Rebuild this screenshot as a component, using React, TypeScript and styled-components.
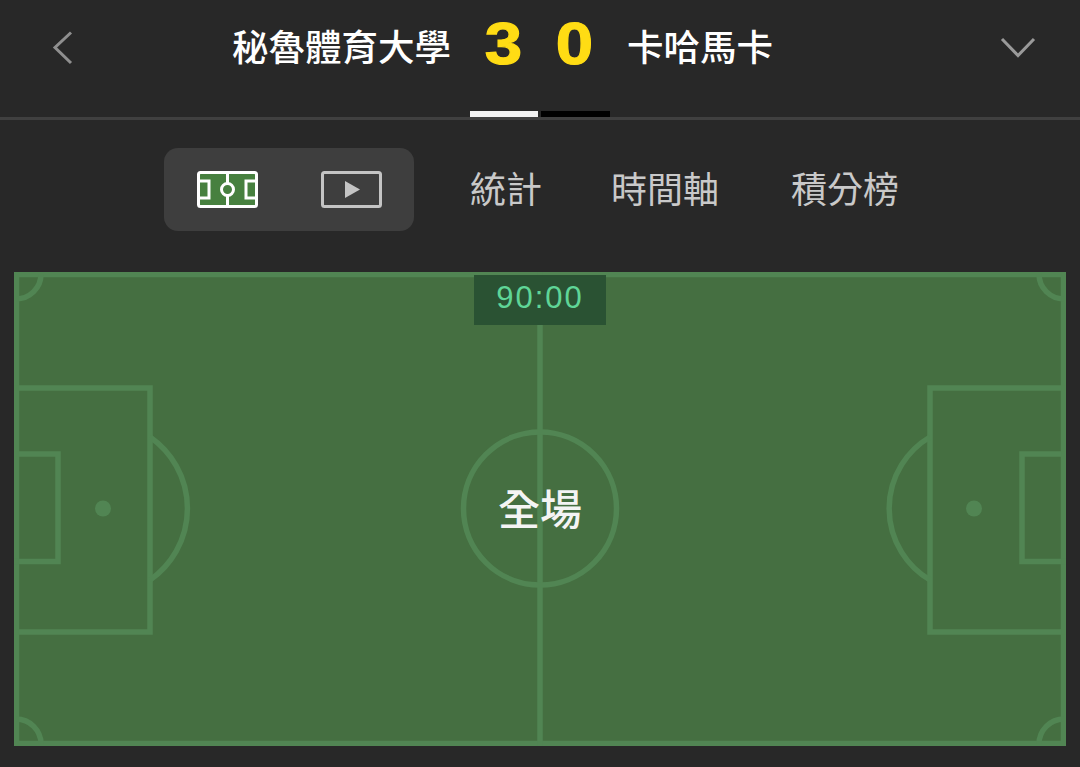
import styled, { createGlobalStyle } from "styled-components";

const GlobalStyle = createGlobalStyle`
  html, body {
    margin: 0;
    padding: 0;
    background: #282828;
  }
  body {
    font-family: "Noto Sans CJK TC", "Liberation Sans", sans-serif;
  }
`;

const Page = styled.div`
  width: 1080px;
  height: 767px;
  overflow: hidden;
  background: #282828;
`;

const Header = styled.header`
  border-bottom: 3px solid #404040;
`;

const TopRow = styled.div`
  height: 111px;
  display: flex;
  align-items: center;
  padding: 0 44px 16px 52px;
  box-sizing: border-box;
`;

const Match = styled.div`
  display: flex;
  align-items: center;
  margin-left: 158px;
  margin-right: auto;
`;

const Team = styled.span`
  font-size: 36.5px;
  font-weight: 500;
  line-height: 48px;
  color: #fff;
  margin-top: -4px;
`;

const Score = styled.span`
  display: block;
  width: 71px;
  text-align: center;
  font-family: "Liberation Sans", sans-serif;
  font-size: 60px;
  font-weight: 700;
  line-height: 60px;
  color: #ffdc14;
  -webkit-text-stroke: 1.2px #ffdc14;
  transform: scaleX(1.12);
`;

const Scores = styled.div`
  display: flex;
  margin: -8px 17px 0 17px;
`;

const Pager = styled.div`
  display: flex;
  justify-content: center;
  gap: 3px;
  height: 6px;
`;

const Dot = styled.span<{ $active?: boolean }>`
  width: ${(p) => (p.$active ? 68 : 69)}px;
  background: ${(p) => (p.$active ? "#f2f2f2" : "#000")};
`;

const Tabs = styled.nav`
  display: flex;
  align-items: center;
  height: 83px;
  margin-top: 28px;
  padding-left: 164px;
`;

const Toggle = styled.div`
  width: 250px;
  height: 83px;
  display: flex;
  align-items: center;
  justify-content: space-between;
  padding: 0 32px 0 33px;
  box-sizing: border-box;
  border-radius: 14px;
  background: #3e3e3e;
  margin-right: 56px;
`;

const Tab = styled.span`
  font-size: 36px;
  line-height: 48px;
  font-weight: 400;
  color: #c9c9c9;
  margin-right: 72px;
  padding-bottom: 6px;

  &:first-of-type {
    margin-right: 69px;
  }
`;

const PitchWrap = styled.section`
  position: relative;
  width: 1052px;
  height: 474px;
  margin: 41px 14px 0;
`;

const PitchSvg = styled.svg`
  display: block;
`;

const Clock = styled.div`
  position: absolute;
  top: 3px;
  left: 460px;
  width: 132px;
  height: 50px;
  background: #2a5233;
  color: #5fd597;
  font-family: "Liberation Sans", sans-serif;
  font-size: 31px;
  letter-spacing: 2px;
  line-height: 45px;
  text-align: center;
`;

const Period = styled.div`
  position: absolute;
  left: 0;
  right: 0;
  top: 207px;
  text-align: center;
  color: #f4f4f4;
  font-size: 42px;
  font-weight: 500;
  line-height: 56px;
`;

const BackIcon = () => (
  <svg width="22" height="34" viewBox="0 0 22 34" fill="none" stroke="#8f8f8f" strokeWidth="3">
    <path d="M19 1.5 L3 16.5 L19 32" />
  </svg>
);

const DownIcon = () => (
  <svg width="36" height="22" viewBox="0 0 36 22" fill="none" stroke="#9a9a9a" strokeWidth="3">
    <path d="M2 2 L18 18.5 L34 2" />
  </svg>
);

const FieldIcon = () => (
  <svg width="61" height="37" viewBox="0 0 61 37" fill="#47803f" stroke="#fff" strokeWidth="3">
    <rect x="1.5" y="1.5" width="58" height="34" rx="2" />
    <path d="M2 10 H12 V27 H2 M59 10 H49 V27 H59 M30.5 2 V35" fill="none" />
    <circle cx="30.5" cy="18.5" r="6" />
  </svg>
);

const PlayIcon = () => (
  <svg width="61" height="37" viewBox="0 0 61 37" fill="none">
    <rect x="1.5" y="1.5" width="58" height="34" rx="2" stroke="#c4c4c4" strokeWidth="3" />
    <path d="M24 10 L39 18.5 L24 27 Z" fill="#c4c4c4" />
  </svg>
);

const Pitch = () => (
  <PitchSvg width="1052" height="474" viewBox="0 0 1052 474" fill="none" stroke="#518553" strokeWidth="5.5">
    <rect x="0" y="0" width="1052" height="474" fill="#456f41" stroke="none" />
    <rect x="2.5" y="2.5" width="1047" height="469" />
    <path d="M526 0 V474" />
    <circle cx="526" cy="236.5" r="76.5" />
    <path d="M0 116 H136 V360 H0 M0 182 H44 V289.5 H0" />
    <path d="M1052 116 H916 V360 H1052 M1052 182 H1008 V289.5 H1052" />
    <path d="M136 165 A 87 87 0 0 1 136 308" />
    <path d="M916 165 A 83 83 0 0 0 916 308" />
    <path d="M2 27 A 25 25 0 0 0 27 2 M1025 2 A 25 25 0 0 0 1050 27 M2 447 A 25 25 0 0 1 27 472 M1025 472 A 25 25 0 0 1 1050 447" />
    <circle cx="89" cy="236.5" r="8" fill="#518553" stroke="none" />
    <circle cx="960" cy="236.5" r="8" fill="#518553" stroke="none" />
  </PitchSvg>
);

export default function App() {
  return (
    <>
      <GlobalStyle />
      <Page>
        <Header>
          <TopRow>
            <BackIcon />
            <Match>
              <Team>秘魯體育大學</Team>
              <Scores>
                <Score>3</Score>
                <Score>0</Score>
              </Scores>
              <Team>卡哈馬卡</Team>
            </Match>
            <DownIcon />
          </TopRow>
          <Pager>
            <Dot $active />
            <Dot />
          </Pager>
        </Header>
        <Tabs>
          <Toggle>
            <FieldIcon />
            <PlayIcon />
          </Toggle>
          <Tab>統計</Tab>
          <Tab>時間軸</Tab>
          <Tab>積分榜</Tab>
        </Tabs>
        <PitchWrap>
          <Pitch />
          <Clock>90:00</Clock>
          <Period>全場</Period>
        </PitchWrap>
      </Page>
    </>
  );
}
